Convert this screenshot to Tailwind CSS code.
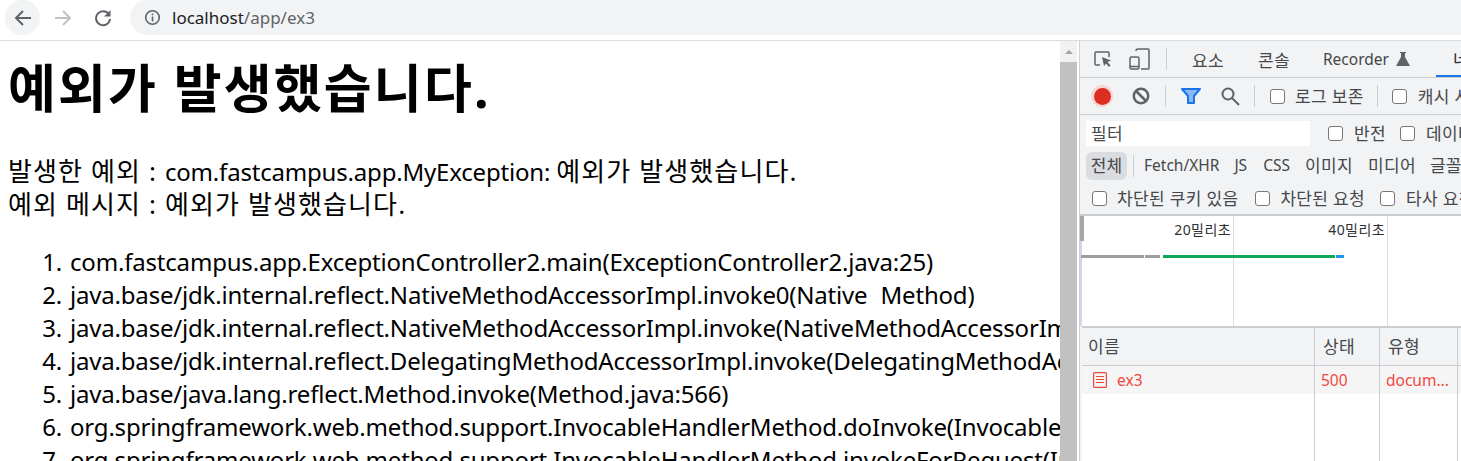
<!DOCTYPE html>
<html lang="ko">
<head>
  <meta charset="UTF-8" />
  <title>localhost/app/ex3</title>
  <script src="https://cdn.jsdelivr.net/npm/@tailwindcss/browser@4"></script>
</head>
<body class="w-[1461px] h-[461px] overflow-hidden bg-white font-['Noto_Sans','Noto_Sans_CJK_KR',sans-serif]">

  <!-- browser toolbar -->
  <div class="h-[41px] flex items-center border-b border-[#dadce0] bg-white pb-[5px]">
    <div class="ml-[5px] w-[35px] h-[35px] rounded-full bg-[#f1f3f4] flex items-center justify-center">
      <svg width="18" height="18" viewBox="0 0 18 18" fill="none" stroke="#5f6368" stroke-width="2"><path d="M17 9H2M9 2L2 9l7 7"/></svg>
    </div>
    <div class="ml-[5px] w-[35px] h-[35px] flex items-center justify-center">
      <svg width="18" height="18" viewBox="0 0 18 18" fill="none" stroke="#bdc1c6" stroke-width="2"><path d="M1 9h15M9 2l7 7-7 7"/></svg>
    </div>
    <div class="ml-[5px] w-[35px] h-[35px] flex items-center justify-center">
      <svg width="18" height="18" viewBox="0 0 18 18" fill="none" stroke="#5f6368" stroke-width="2"><path d="M15 5.500A7 7 0 1 0 16 10"/><path d="M16.500 1v6.500H10z" fill="#5f6368" stroke="none"/></svg>
    </div>
    <div class="ml-[10px] flex-1 h-[35px] rounded-l-full bg-[#f1f3f4] flex items-center pl-[14px]">
      <svg width="17" height="17" viewBox="0 0 17 17" fill="none" stroke="#5f6368" stroke-width="1.600"><circle cx="8.500" cy="8.500" r="6.800"/><path d="M8.500 7.500v5M8.500 4.500v1.800"/></svg>
      <span class="ml-[11px] text-[17px] leading-none text-[#5f6368]"><span class="text-[#202124]">localhost</span>/app/ex3</span>
    </div>
  </div>

  <div class="flex h-[420px]">
    <!-- page -->
    <div class="w-[1060px] shrink-0 overflow-hidden pl-2 text-black">
      <h1 class="mt-[14px] text-[52px] leading-[66px] font-bold whitespace-nowrap tracking-[0.042em]">예외가 발생했습니다.</h1>
      <p class="mt-[34px] text-[24px] leading-[33px] whitespace-nowrap tracking-[-0.19px]"><span class="text-[26px] tracking-[0.043em]">발생한 예외 : </span>com.fastcampus.app.MyException: <span class="text-[26px] tracking-[0.043em]">예외가 발생했습니다.</span><br><span class="text-[26px] tracking-[0.043em]">예외 메시지 : 예외가 발생했습니다.</span></p>
      <ol class="mt-[24px] pl-[62px] list-decimal text-[24px] leading-[33px] whitespace-nowrap tracking-[-0.19px] [word-spacing:2px]">
        <li>com.fastcampus.app.ExceptionController2.main(ExceptionController2.java:25)</li>
        <li>java.base/jdk.internal.reflect.NativeMethodAccessorImpl.invoke0(<span class="[word-spacing:7px]">Native Method</span>)</li>
        <li>java.base/jdk.internal.reflect.NativeMethodAccessorImpl.invoke(NativeMethodAccessorImpl.java:62)</li>
        <li>java.base/jdk.internal.reflect.DelegatingMethodAccessorImpl.invoke(DelegatingMethodAccessorImpl.java:43)</li>
        <li>java.base/java.lang.reflect.Method.invoke(Method.java:566)</li>
        <li>org.springframework.web.method.support.InvocableHandlerMethod.doInvoke(InvocableHandlerMethod.java:205)</li>
        <li>org.springframework.web.method.support.InvocableHandlerMethod.invokeForRequest(InvocableHandlerMethod.java:150)</li>
      </ol>
    </div>

    <!-- scrollbar -->
    <div class="w-[17px] shrink-0 bg-[#f1f1f1] flex flex-col">
      <div class="h-[21px] flex items-center justify-center">
        <div class="w-0 h-0 border-x-[4px] border-x-transparent border-b-[4px] border-b-[#a3a3a3]"></div>
      </div>
      <div class="flex-1 bg-[#c1c1c1]"></div>
    </div>
    <div class="w-[2px] shrink-0 bg-white"></div>

    <!-- devtools -->
    <div class="flex-1 min-w-0 overflow-hidden border-l border-[#d0d0d0] bg-[#f1f3f4] text-[#45474a] text-[15.500px] leading-none whitespace-nowrap">
      <div class="h-[37px] flex items-center border-b border-[#cbcdd1] [&>*]:shrink-0">
        <svg class="ml-[13px]" width="20" height="20" viewBox="0 0 20 20" fill="none" stroke="#5f6368" stroke-width="1.500"><path d="M7 16H3a1 1 0 0 1-1-1V4a1 1 0 0 1 1-1h12a1 1 0 0 1 1 1v4"/><path d="M9 8l9 3.500-3.500 1.500 3 3.500-1.500 1.500-3-3.500L11 17z" fill="#5f6368" stroke="none"/></svg>
        <svg class="ml-[16px]" width="22" height="24" viewBox="0 0 22 24" fill="none" stroke="#5f6368" stroke-width="1.500"><path d="M7 4a2 2 0 0 1 2-2h10a1 1 0 0 1 1 1v18a1 1 0 0 1-1 1h-7"/><rect x="1" y="10" width="9" height="12" rx="1.500"/><path d="M1 19.500h9"/></svg>
        <div class="ml-[15px] w-px h-[22px] bg-[#cbcdd1]"></div>
        <span class="ml-[25px] pt-[2px] text-[17px] tracking-[0.02em]">요소</span>
        <span class="ml-[34px] pt-[2px] text-[17px] tracking-[0.02em]">콘솔</span>
        <span class="ml-[33px] pt-[2px]">Recorder</span>
        <svg class="ml-[7px]" width="14" height="14" viewBox="0 0 14 14" fill="#5f6368"><path d="M4 0h6v1H9v4l5 9H0l5-9V1H4z"/></svg>
        <div class="ml-[26px] h-full w-[40px] border-b-2 border-[#1a73e8] flex items-center pl-[17px] text-[#333]"><span class="pt-[2px] text-[17px] tracking-[0.02em]">네트워크</span></div>
      </div>

      <div class="h-[37px] flex items-center border-b border-[#cbcdd1] [&>*]:shrink-0">
        <div class="ml-[11px] w-[22px] h-[22px] rounded-full bg-[#f6d5d2] flex items-center justify-center"><div class="w-[17px] h-[17px] rounded-full bg-[#dc2f22]"></div></div>
        <svg class="ml-[18px]" width="20" height="20" viewBox="0 0 20 20" fill="none" stroke="#5f6368" stroke-width="2.500"><circle cx="10" cy="10" r="7.200"/><path d="M5 5l10 10"/></svg>
        <div class="ml-[14px] w-px h-[22px] bg-[#cbcdd1]"></div>
        <svg class="ml-[15px]" width="20" height="18" viewBox="0 0 20 18" fill="#8ab8f5" stroke="#1a73e8" stroke-width="2" stroke-linejoin="round"><path d="M1 2h18l-6 7v7H7V9z"/></svg>
        <svg class="ml-[19px]" width="20" height="20" viewBox="0 0 20 20" fill="none" stroke="#5f6368" stroke-width="2"><circle cx="8" cy="8" r="5.500"/><path d="M12 12l7 7"/></svg>
        <div class="ml-[14px] w-px h-[22px] bg-[#cbcdd1]"></div>
        <span class="ml-[15px] w-[15px] h-[15px] rounded-[3px] border border-[#767676] bg-white"></span>
        <span class="ml-[10px] text-[17px] tracking-[0.02em]">로그 보존</span>
        <div class="ml-[13px] w-px h-[22px] bg-[#cbcdd1]"></div>
        <span class="ml-[14px] w-[15px] h-[15px] rounded-[3px] border border-[#767676] bg-white"></span>
        <span class="ml-[11px] text-[17px] tracking-[0.02em]">캐시 사용 중지</span>
      </div>

      <div class="h-[101px] border-b-2 border-[#cbcdd1]">
        <div class="h-[35px] flex items-center pt-[1px] [&>*]:shrink-0">
          <div class="ml-[6px] w-[224px] h-[25px] bg-white flex items-center pl-[5px] text-[17px] tracking-[0.02em]">필터</div>
          <span class="ml-[18px] w-[15px] h-[15px] rounded-[3px] border border-[#767676] bg-white"></span>
          <span class="ml-[11px] text-[17px] tracking-[0.02em]">반전</span>
          <span class="ml-[14px] w-[15px] h-[15px] rounded-[3px] border border-[#767676] bg-white"></span>
          <span class="ml-[11px] text-[17px] tracking-[0.02em]">데이터 URL 숨기기</span>
        </div>
        <div class="h-[31px] flex items-center [&>*]:shrink-0">
          <div class="ml-[6px] w-[41px] h-[28px] rounded-[6px] bg-[#dadce0] flex items-center justify-center text-[17px]">전체</div>
          <div class="ml-[6px] w-px h-[22px] bg-[#cbcdd1]"></div>
          <span class="ml-[10px]">Fetch/XHR</span>
          <span class="ml-[15px]">JS</span>
          <span class="ml-[16px]">CSS</span>
          <span class="ml-[15px] text-[17px] tracking-[0.02em]">이미지</span>
          <span class="ml-[15px] text-[17px] tracking-[0.02em]">미디어</span>
          <span class="ml-[14px] text-[17px] tracking-[0.02em]">글꼴</span>
        </div>
        <div class="h-[34px] flex items-center [&>*]:shrink-0">
          <span class="ml-[12px] w-[15px] h-[15px] rounded-[3px] border border-[#767676] bg-white"></span>
          <span class="ml-[10px] text-[17px] tracking-[0.02em]">차단된 쿠키 있음</span>
          <span class="ml-[17px] w-[15px] h-[15px] rounded-[3px] border border-[#767676] bg-white"></span>
          <span class="ml-[10px] text-[17px] tracking-[0.02em]">차단된 요청</span>
          <span class="ml-[15px] w-[15px] h-[15px] rounded-[3px] border border-[#767676] bg-white"></span>
          <span class="ml-[11px] text-[17px] tracking-[0.02em]">타사 요청</span>
        </div>
      </div>

      <!-- timeline overview -->
      <div class="relative h-[110px] bg-white border-l-2 border-[#cfd8e8]">
        <div class="absolute left-[-2px] top-0 w-1 h-[25px] bg-[#a6a6a6]"></div>
        <div class="absolute left-[151px] top-0 bottom-0 w-px bg-[#dadce0]"></div>
        <div class="absolute left-[305px] top-0 bottom-0 w-px bg-[#dadce0]"></div>
        <span class="absolute right-[230px] top-[7px] text-[14px] text-[#303134] tracking-[0.03em]">20밀리초</span>
        <span class="absolute right-[76px] top-[7px] text-[14px] text-[#303134] tracking-[0.03em]">40밀리초</span>
        <div class="absolute left-[-1px] top-[39px] flex gap-px h-[3px]">
          <div class="w-[63px] bg-[#9d9d9d]"></div>
          <div class="w-[15px] bg-[#9d9d9d]"></div>
          <div class="w-px"></div>
          <div class="w-[172px] bg-[#0fa958]"></div>
          <div class="w-[8px] bg-[#2196f3]"></div>
        </div>
      </div>

      <!-- request table -->
      <div class="border-t-2 border-[#cbcdd1] bg-white ml-[2px] h-[136px] relative">
        <div class="h-[38px] flex items-center bg-[#f1f3f4] border-b border-[#cbcdd1]">
          <span class="pl-[6px] w-[234px] text-[17px] tracking-[0.02em]">이름</span>
          <span class="pl-[7px] w-[65px] text-[17px] tracking-[0.02em]">상태</span>
          <span class="pl-[7px] text-[17px] tracking-[0.02em]">유형</span>
        </div>
        <div class="h-[28px] flex items-center bg-[#f5f5f5] text-[#f0483e]">
          <div class="pl-[11px] w-[234px] flex items-center">
            <svg width="14" height="16" viewBox="0 0 14 16" fill="none" stroke="#f0483e" stroke-width="1.200"><rect x="0.600" y="0.600" width="12.800" height="14.800" rx="1"/><path d="M3 4.500h8M3 7.500h8M3 10.500h8"/></svg>
            <span class="ml-[10px] pt-[2px]">ex3</span>
          </div>
          <span class="pl-[5px] w-[65px] pt-[2px]">500</span>
          <span class="pl-[5px] pt-[2px]">docum...</span>
        </div>
        <div class="absolute left-[232px] top-0 bottom-0 w-px bg-[#cbcdd1]"></div>
        <div class="absolute left-[297px] top-0 bottom-0 w-px bg-[#cbcdd1]"></div>
        <div class="absolute left-[375px] top-0 bottom-0 w-px bg-[#cbcdd1]"></div>
      </div>
    </div>
  </div>
</body>
</html>
